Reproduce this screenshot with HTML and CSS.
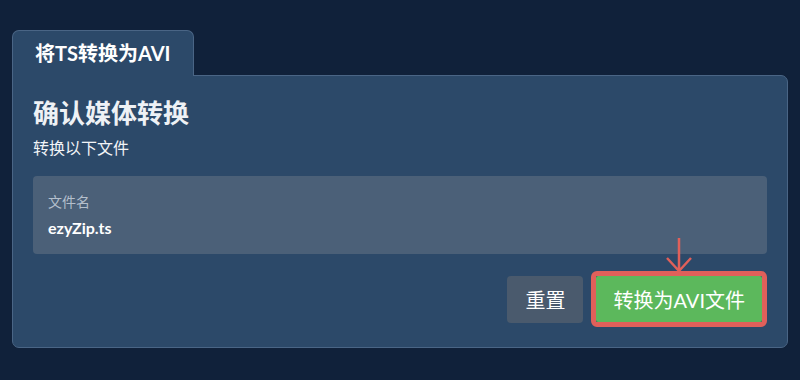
FILE: index.html
```html
<!DOCTYPE html>
<html lang="zh">
<head>
  <meta charset="UTF-8">
  <meta name="viewport" content="width=device-width, initial-scale=1">
  <title>将TS转换为AVI</title>
  <link rel="stylesheet" href="styles.css">
</head>
<body>
  <div class="converter">
    <div class="tab">将TS转换为AVI</div>
    <section class="panel">
      <h2>确认媒体转换</h2>
      <p class="lead">转换以下文件</p>
      <div class="file-box">
        <div class="file-label">文件名</div>
        <div class="file-name">ezyZip.ts</div>
      </div>
      <div class="actions">
        <button type="button" class="btn btn-reset">重置</button>
        <span class="highlight">
          <svg class="arrow" width="30" height="36" viewBox="0 0 30 36" aria-hidden="true">
            <path d="M15 1 V34 M3 21 L15 34 L27 21" fill="none" stroke="#e0605a" stroke-width="2.5"/>
          </svg>
          <button type="button" class="btn btn-convert">转换为AVI文件</button>
        </span>
      </div>
    </section>
  </div>
</body>
</html>
```

FILE: styles.css
```css
*, *::before, *::after { box-sizing: border-box; }
body { margin: 0; padding: 30px 12px 0; background: #10213a; font-family: Lato, "Noto Sans CJK SC", sans-serif; color: #fff; }
.converter { display: flex; flex-direction: column; align-items: flex-start; }
.tab { position: relative; z-index: 1; margin-bottom: -1px; padding: 0 22px; height: 46px; line-height: 44px; font-size: 20px; font-weight: bold; background: #2c4969; border: 1px solid #4a6585; border-bottom: none; border-radius: 7px 7px 0 0; }
.panel { width: 100%; padding: 22px 20px 20px; background: #2c4969; border: 1px solid #4a6585; border-radius: 0 7px 7px 7px; }
.panel h2 { margin: 0; font-size: 26px; line-height: 30px; font-weight: bold; color: #eef1f5; }
.panel .lead { margin: 9px 0 17px; font-size: 16px; line-height: 22px; color: #f2f4f7; }
.file-box { padding: 16px 15px; background: #4b6078; border-radius: 4px; }
.file-label { font-size: 14px; line-height: 20px; color: #b4bfcc; }
.file-name { margin-top: 6px; font-size: 16px; line-height: 20px; font-weight: bold; color: #fff; }
.actions { display: flex; justify-content: flex-end; align-items: center; gap: 8px; margin-top: 17px; }
.btn { font-family: inherit; font-size: 20px; color: #fff; border: none; border-radius: 4px; cursor: pointer; }
.btn-reset { height: 47px; padding: 0 18px; background: #4a5a6d; }
.highlight { position: relative; display: flex; border: 5px solid #e0605a; border-radius: 6px; }
.btn-convert { height: 46px; padding: 0 17px; background: #5cb85c; border-radius: 2px; }
.arrow { position: absolute; left: 50%; bottom: 100%; margin-left: -15px; margin-bottom: 3px; }
```
